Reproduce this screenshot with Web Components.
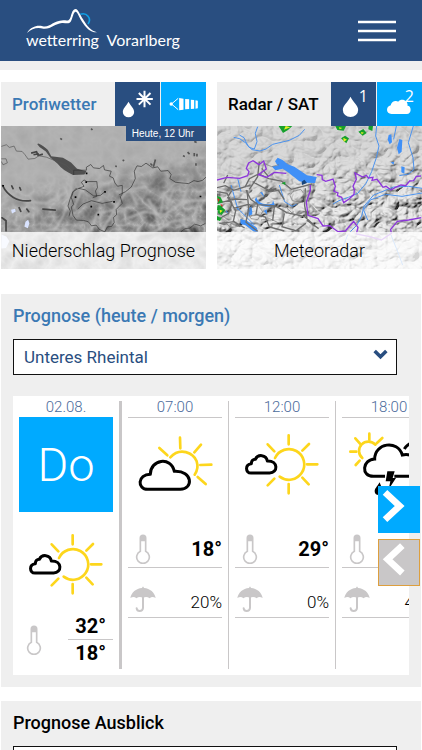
<!DOCTYPE html>
<html lang="de">
<head>
<meta charset="utf-8">
<meta name="viewport" content="width=device-width, initial-scale=1">
<title>wetterring Vorarlberg</title>
<style>
  body {
    margin: 0;
    background: #fff;
    color: #000;
    font-family: Roboto, "Liberation Sans", sans-serif;
    --blue: #294e80;
    --cyan: #0af;
    --link: #3b79b4;
    --grey: #efefef;
    --line: #c9c7c8;
  }
  main {
    display: flex;
    flex-direction: column;
    gap: 14px;
    padding: 12px 1px 24px;
  }
  .tiles {
    display: grid;
    grid-template-columns: 1fr 1fr;
    gap: 11px;
    margin: 0 -1px 11px 0;
  }
</style>
</head>
<body>

<wr-header></wr-header>
<main>
  <div class="tiles">
    <wr-tile data-icons="rainsnow,windsock" data-labels="Niederschlag,Wind">
      <a slot="title" href="#profiwetter">Profiwetter</a>
      <wr-map slot="map" data-name="precipitation"></wr-map>
      <span slot="badge">Heute, 12 Uhr</span>
      <span slot="caption">Niederschlag Prognose</span>
    </wr-tile>
    <wr-tile data-icons="drop,cloud" data-labels="Radar,Satellit" data-numbers="1,2" style="--link: #000">
      <a slot="title" href="#radar">Radar / SAT</a>
      <wr-map slot="map" data-name="radar"></wr-map>
      <span slot="caption">Meteoradar</span>
    </wr-tile>
  </div>

  <wr-panel data-title="Prognose (heute / morgen)">
    <wr-forecast>
      <wr-day data-date="02.08." data-day="Do" data-icon="sunny" data-max="32°" data-min="18°"></wr-day>
      <wr-hour data-time="07:00" data-icon="cloudy" data-temp="18°" data-rain="20%"></wr-hour>
      <wr-hour data-time="12:00" data-icon="sunny" data-temp="29°" data-rain="0%"></wr-hour>
      <wr-hour data-time="18:00" data-icon="thunder" data-temp="" data-rain="40%"></wr-hour>
    </wr-forecast>
  </wr-panel>

  <wr-panel data-title="Prognose Ausblick" style="--link: #000"></wr-panel>
</main>

<script>
const icons = {
  rainsnow: `<svg viewBox="345 21 132 132">
    <path fill="#fff" d="M384 80c7 13 17 20 17 31a17 16 0 0 1-34 0c0-11 10-18 17-31z"/>
    <path stroke="#fff" stroke-width="6" d="M432 47v50M408 72h49M415 54l35 35M450 54l-35 35"/></svg>`,
  windsock: `<svg viewBox="483 21 132 132">
    <path fill="#fff" d="M536 69l13 2v33l-13 2zM554 72l12 1v29l-12 1zM571 74l10 1v26l-10 1zM585 76l7 1v23l-7 1z"/>
    <path fill="none" stroke="#fff" stroke-width="3" d="M533 70l-20 17 20 17"/>
    <circle cx="512" cy="87" r="5" fill="#fff"/></svg>`,
  drop: `<svg viewBox="362 21 132 132">
    <path fill="#fff" d="M419 65c8 17 23 25 23 40a23 21 0 0 1-46 0c0-15 15-23 23-40z"/></svg>`,
  cloud: `<svg viewBox="499 21 132 132">
    <path fill="#fff" d="M541 117c-17 0-18-23-2-26 1-13 17-16 22-11 10-13 31-3 28 12 13 0 13 25-2 25z"/></svg>`,
  sunny: `<svg viewBox="-105 70 282 336" preserveAspectRatio="xMidYMin slice">
    <g fill="none" stroke="#fdd61c" stroke-width="8" stroke-linecap="round">
      <path d="M15 190A46 46 0 1 1 29 246"/>
      <path d="M56 122v27M56 268v28M111 209h31M97 168l20-20M97 249l19 20M13 170l-20-21M13 252l-20 20"/></g>
    <path fill="none" stroke="#000" stroke-width="9" stroke-linejoin="round" d="M-57 235c-18 0-18-26 1-28 0-14 12-13 12-13 7-16 33-15 36 5 34-1 32 36 7 36z"/></svg>`,
  cloudy: `<svg viewBox="24 70 282 336">
    <g fill="none" stroke="#fdd61c" stroke-width="8" stroke-linecap="round">
      <path d="M151 188C180 156 220 174 230 200C235 215 232 228 224 240"/>
      <path d="M180 129l1 32M243 150l-20 23M241 211l33-1M233 247l24 21M118 160l24 22"/></g>
    <path fill="none" stroke="#000" stroke-width="9" stroke-linejoin="round" d="M83 284c-32 0-31-45 8-45 0-45 62-55 72-9 57-3 57 54 18 54z"/></svg>`,
  thunder: `<svg viewBox="213 70 282 336">
    <g fill="none" stroke="#fdd61c" stroke-width="8" stroke-linecap="round">
      <path d="M274 190A28 28 0 1 1 313 150"/>
      <path d="M295 117v18M317 146l17-16M238 171h18M253 131l14 16M254 211l12-13"/></g>
    <g fill="none" stroke="#000" stroke-width="9">
      <path d="M342 245H307C269 245 274 194 311 193C311 145 380 134 394 181C450 170 466 245 414 245H370"/>
      <path d="M400 163Q408 149 425 143Q454 140 459 171"/></g>
    <path d="M349 230h22l-6 20h10l-22 34 5-24h-14zM326 263c-8 14-15 18-15 27a12 11 0 0 0 24 0c0-9-5-14-9-27z"/></svg>`,
  thermometer: `<svg viewBox="46 38 46 90">
    <path fill="none" stroke="#c9c7c8" stroke-width="5" d="M61 90V50q0-8 8-8t8 8v40a19 19 0 1 1-16 0z"/>
    <path fill="#c9c7c8" d="M61 60V48q8-12 16 0v12z"/></svg>`,
  umbrella: `<svg viewBox="31 196 78 78">
    <path fill="#c9c7c8" d="M32 232c3-16 17-29 35-30q3-9 6 0c18 1 32 14 35 30q-11-6-18 1-10-7-20-1-10-6-20 1-7-7-18-1z"/>
    <path fill="none" stroke="#c9c7c8" stroke-width="6" stroke-linecap="round" d="M70 230v32q-1 9-10 9-8 0-9-8"/></svg>`,
  chevron: `<svg viewBox="1118 176 44 34"><path fill="none" stroke="#294e80" stroke-width="11" d="M1122 182l18 18 18-18"/></svg>`,
  next: `<svg viewBox="325 273 126 140"><path fill="none" stroke="#fff" stroke-width="20" d="M346 292l44 41-44 41"/></svg>`,
  prev: `<svg viewBox="328 178 120 134"><path fill="none" stroke="#fff" stroke-width="20" d="M398 195l-44 41 44 41"/></svg>`,
  menu: `<svg viewBox="0 0 38 22"><path stroke="#fff" stroke-width="2.6" d="M0 2h38M0 11h38M0 20h38"/></svg>`
};

customElements.define('wr-icon',
    class extends HTMLElement {
        constructor() {
            super();
            this.attachShadow({ mode: 'open' });
        }

        connectedCallback() {
            this.shadowRoot.innerHTML = `
<style>
  :host { display: block; }
  svg { display: block; width: 100%; height: 100%; }
</style>
${icons[this.dataset.name]}`;
            this.shadowRoot.querySelector('svg').setAttribute('aria-hidden', 'true');
        }
    });

const maps = {
  precipitation: `<svg viewBox="3 153 612 429" preserveAspectRatio="xMidYMid slice">
    <defs>
      <filter id="relief" x="0" y="0" width="100%" height="100%" color-interpolation-filters="sRGB">
        <feTurbulence type="turbulence" baseFrequency="0.02" numOctaves="3" seed="8"/>
        <feColorMatrix values="-.9 0 0 0 .78  -.9 0 0 0 .78  -.9 0 0 0 .78  0 0 0 0 1"/>
      </filter>
      <filter id="soft"><feGaussianBlur stdDeviation="3"/></filter>
      <linearGradient id="south" x1=".3" y1="0" x2=".6" y2="1">
        <stop offset=".3" stop-color="#111"/><stop offset=".75" stop-color="#aaa"/>
      </linearGradient>
      <mask id="alps"><rect x="3" y="153" width="612" height="429" fill="url(#south)"/></mask>
    </defs>
    <rect x="3" y="153" width="612" height="429" fill="#b3b3b3"/>
    <path filter="url(#soft)" fill="#a1a1a1" d="M200 400l60-60 100-10 40-20 215-60v332H3V450z"/>
    <rect x="3" y="153" width="612" height="429" filter="url(#relief)" mask="url(#alps)"/>
    <g filter="url(#soft)" fill="none" stroke="#bdbdbd" stroke-width="5">
      <path d="M215 310l-5 50-20 60-30 50M250 330l-30 70M270 470l20-55 50-10 40-60 60-10M300 470l40-60M380 430l50-20 60 10 60-40 65-5M400 480l60-10 50-30 60-10M410 390l-20-40M440 370l30 50M490 350l-10 65M520 340l-20 50M560 340l-20 50M460 400l20 70M540 430l30 50M590 390l-10 50M100 480l60-20 40 10M20 350l60 30 60 5 60-35"/>
    </g>
    <path fill="#505050" d="M115 206c10 5 19 11 28 20l10 18 35 5 24 14 18 19 28 7-6 10-34 1c-19-8-36-20-46-33l-22-19-13-18-19-13-7-9z"/>
    <path fill="none" stroke="#444" stroke-width="5" d="M93 235l16-4 5 11 14-4M100 240l16-3"/>
    <path fill="none" stroke="#454545" stroke-width="5" stroke-linecap="round" d="M8 332q10 22 33 36 18 12 50 9M128 402l37 3M35 333l4 8M59 338l3 7M57 398l5 11M80 402l6 8M6 428l12 9v30"/>
    <g fill="none" stroke="#555" stroke-width="2">
      <path d="M4 215l15-5 9 8 14-4 7 15 17 1 8 9 10 14 20-2 12-8 22 4 30 12 30 12 20 20M4 252h14l4 12-13 6-5-10"/>
      <path stroke="#333" d="M220 300v-14h38v-9l13-8 8 10 18 2 12-9 3 13 20 4-5 15 11 5 5 15 8 10 14-3v26l-6 8 6 20-10 10-8 8 1 16-9 8 2 15-8 12-12 1-8 15-16-7-10-13-14 2-9-12-14-4-22-1-10-14-5-25 7-8-7-20 6-18 12-8 20-8-8-12 8-7 8 5h30l2 18-6 10 4 16-12 4M235 340l20 5 25 18 20-2 12-10M232 402l16-15 25-10 32 8 31-6M355 360l20-10 17-14 12-25-3-22 8-16 13 2 14-10 20 14 15-3 9 13 22-2 9 12-4 12 17 11 18 2 21 2 16-9 12 3 14-4 14-13 24-2M206 424l4-16-7-15 6-20 8-22 12-12M540 470l13-10 14-1 14-12 18 5 14-7"/>
    </g>
    <path fill="none" stroke="#555" stroke-width="5" d="M180 191l5 4M272 162l4 4M464 254l-6 22M449 266l6 6M560 232l6 6M580 235v9M588 237v8M546 243l6 2M585 265v8M366 256l5 2M344 274l5 1M580 200l7 3"/>
    <path d="M255 319h5v5h-5zM311 348h5v5h-5zM338 378h5v5h-5zM223 364h5v5h-5zM270 392h5v5h-5zM291 416h5v5h-5zM596 362h5v5h-5zM256 293h5v5h-5zM7 330h5v5h-5z"/>
    <path fill="#d9e3ff" d="M33 404l12-3 2 8-11 6zM73 455l3-15 8-6 4 10-5 15zM4 478l15 6 9 14-10 20-14 2z"/>
  </svg>`,
  radar: `<svg viewBox="18 153 615 429" preserveAspectRatio="xMidYMid slice">
    <defs>
      <filter id="relief" x="0" y="0" width="100%" height="100%">
        <feTurbulence type="turbulence" baseFrequency="0.016 0.02" numOctaves="3" seed="21"/>
        <feColorMatrix values="0 0 0 0 0  0 0 0 0 0  0 0 0 0 0  1 0 0 0 0"/>
        <feDiffuseLighting surfaceScale="26" lighting-color="#f4f4f4"><feDistantLight azimuth="225" elevation="55"/></feDiffuseLighting>
      </filter>
      <linearGradient id="south" x1=".4" y1="0" x2=".6" y2="1">
        <stop offset=".2" stop-color="#333"/><stop offset=".6" stop-color="#ccc"/>
      </linearGradient>
      <mask id="alps"><rect x="18" y="153" width="615" height="429" fill="url(#south)"/></mask>
    </defs>
    <rect x="18" y="153" width="615" height="429" fill="#d2d2d2"/>
    <rect x="18" y="153" width="615" height="429" filter="url(#relief)" mask="url(#alps)"/>
    <g fill="none" stroke="#4c93ee" stroke-width="3">
      <path d="M140 155l-7 20 5 25-8 22-16-5-8-12-20-14-18-4M85 180l14 8 10 22 14 14 24 4 18-6 20-14 50-12 30-15 16-18M497 153l-3 30 10 30-8 35-14 42-17 35-25 30-28 12-28 10-18 10M556 153l-8 40M607 153l-15 50 14 45 3 35-16 14-28 5M633 340l-40-6-45 2-60 24-30 35-5 25-15 30-20 20M633 354l-60 10-50-6-45 17-20 30 12 30M205 330l16 50 22 14 14-6M60 330l20 70 50 50M80 310l10 40M410 480l-20 50M540 480l20 50 15 40"/>
    </g>
    <path fill="#4090f7" d="M200 248c12 4 20 10 30 20l20 7 18 12 20 14 29 5-5 18-27-1-20-4-36-29-14-9-22 5-11-12 18-2-8-13zM533 180l8-2 2 24-7 6-6-14zM565 192l9 3-2 35-9 8-5-20zM571 274l10 3-1 19-9-4zM539 262l10-2-1 9zM136 366c4 16 20 26 48 20l2-10 5 14c-20 12-52 2-60-16zM110 402l12-8 2 24-11 6zM88 432l20 5 30 22 2 11-13-1-24-18-14-4zM147 352h7l6 15zM75 395l8-2-2 13zM45 406l8 9-7-3zM158 408l9-5 1 15z"/>
    <g fill="none" stroke="#6d6d6d" stroke-width="4">
      <path d="M18 338l25-6 25 14 35-11 12-24 28-14 30 14 38 7 30 25 62-16M105 345l14 28 22 16 52 4 34 20 54 12 28 25M38 325l12-25M62 347l-12 20 24 40-7 32 34 20M108 345l5 55-8 42 35 27M68 400l45-12 10 5M18 385l55-13 35 2M145 260l-5 45-25 38M152 280l20 24M125 320l55 30 22-4 18 28M18 350l30 5 15 30-10 30-35 20M140 388l-5 30 28 8 12 30 45 12M190 395l-5 42M220 415l-7 40 42 12 30-22M25 445l45-5 18 15M283 340l-2 52 8 45 34 24"/>
      <path stroke="#777" stroke-width="2" d="M245 350l24-7 10 13-9 26-26-5-7-15zM120 398l22-6 13 18-15 24-20-3-8-15zM150 300l8-35 24 10 22-6M40 440l20 18 34-6M150 435l26-4 30 14M228 400l22 20 22-5"/>
    </g>
    <path fill="none" stroke="#8d35db" stroke-width="4" d="M18 315l30-8 38 3 24-8 4-12-8-10 7-16 13-7 18 12 14-11 8 24-24 17 25 8 23-15 36 3M317 299l16 2 1 13 10 5 22-7 7 22-4 15 12 5-2 8 13 5 6 16 16-11 15-14 1-14-4-10 10-21-4-19 23 12 11-5 6 8 14-2-3 9 15-3 11 14 7 10 9-3 15 11 12-7 18-8 14 2 12-14 12-1 8-13 14-1M298 330v16l-12 35 5 40 30 10 15 22 20-1 25 18 22-2 25-29 13 18-5 20 40 8 35 10 30-20-2-12 20-24 34-4 38-7"/>
    <path fill="#16a02c" d="M203 153h41l-13 12-15 9zM373 153h32l-7 14-19-2zM390 190l12-8 12 8-8 15zM442 170l15-8 10 12-12 8zM473 153h13l-2 15-12-5zM20 403l12-8 11 10-11 15-11-5zM18 363l11 4 7 15-15 4zM18 423l14 7-5 8-9-3zM211 325l12-5v10zM20 390l14 2-4 14-12-1z"/>
    <path fill="#e9ef22" d="M224 153l14 4-19 7zM384 157l10 2-8 4zM397 188l11 6-10 6zM450 171l9 2-7 5zM26 404l9 3-8 7z"/>
    <path fill="#e12525" d="M19 370l7 3-4 9zM28 387l7 3-2 6z"/>
    <path fill="#17457d" d="M272 320l8-6 8 10-15 6z"/>
  </svg>`
};

customElements.define('wr-map',
    class extends HTMLElement {
        constructor() {
            super();
            this.attachShadow({ mode: 'open' });
        }

        connectedCallback() {
            this.shadowRoot.innerHTML = `
<style>
  :host { display: block; }
  svg { display: block; width: 100%; height: 143px; }
</style>
${maps[this.dataset.name]}`;
        }
    });

const headerhtml = `
<style>
  :host {
    display: block;
    border-bottom: 9px solid var(--grey);
  }
  header {
    display: flex;
    justify-content: space-between;
    align-items: center;
    height: 61px;
    padding: 0 26px;
    box-sizing: border-box;
    background: var(--blue);
  }
  a {
    display: flex;
    flex-direction: column;
    padding-bottom: 5px;
    color: #fff;
    font: 16px/14px Lato, sans-serif;
    white-space: pre;
    text-decoration: none;
  }
  a svg {
    width: 72px;
    height: 24px;
  }
  button {
    width: 38px;
    height: 22px;
    padding: 0;
    border: 0;
    background: none;
  }
</style>
<header>
  <a href="#start"><svg viewBox="78 28 216 72" aria-hidden="true">
      <path fill="none" stroke="#10a0e6" stroke-width="5" d="M241 44C260 37 276 57 264 73"/>
      <path fill="#fff" d="M81 100C94 80 112 76 128 80C152 84 156 64 190 62C205 63 207 64 212 51C216 38 218 29 227 28C235 29 238 42 249 59C262 81 274 94 291 98C271 99 257 83 246 66C234 46 232 36 227 36C220 36 218 57 212 66C206 75 197 69 186 70C164 72 154 89 130 87C111 83 96 86 81 100z"/>
    </svg><span>wetterring  Vorarlberg</span></a>
  <button aria-label="Menü"><wr-icon data-name="menu"></wr-icon></button>
</header>
`;

customElements.define('wr-header',
    class extends HTMLElement {
        constructor() {
            super();
            this.attachShadow({ mode: 'open' });
            this.shadowRoot.innerHTML = headerhtml;
        }
    });

const tilehtml = `
<style>
  :host {
    display: block;
    min-width: 0;
  }
  .head {
    display: flex;
    gap: 1px;
    height: 44px;
    background: var(--grey);
  }
  .title {
    flex: 1;
    align-self: center;
    padding-left: 11px;
    font: 500 17px/20px Roboto, sans-serif;
    white-space: nowrap;
  }
  ::slotted(a) {
    color: var(--link);
    text-decoration: none;
  }
  button {
    position: relative;
    width: 45px;
    padding: 0;
    border: 0;
    background: var(--blue);
    color: #fff;
    font: 16px/16px "Open Sans", sans-serif;
  }
  button wr-icon {
    height: 44px;
  }
  button:last-child {
    background: var(--cyan);
  }
  .number {
    position: absolute;
    top: 6px;
    right: 8px;
  }
  .map {
    position: relative;
  }
  .badge {
    position: absolute;
    top: 0;
    right: 0;
    padding: 0 12px 0 6px;
    background: var(--blue);
    color: #fff;
    font: 10px/15px "Liberation Sans", sans-serif;
  }
  .badge[hidden] {
    display: none;
  }
  .caption {
    position: absolute;
    left: 0;
    right: 0;
    bottom: 0;
    background: rgba(255, 255, 255, 0.8);
    font: 300 18px/37px Roboto, sans-serif;
    text-align: center;
    white-space: nowrap;
  }
</style>
<div class="head">
  <div class="title"><slot name="title"></slot></div>
</div>
<div class="map">
  <slot name="map"></slot>
  <div class="badge"><slot name="badge"></slot></div>
  <div class="caption"><slot name="caption"></slot></div>
</div>
`;

customElements.define('wr-tile',
    class extends HTMLElement {
        constructor() {
            super();
            this.attachShadow({ mode: 'open' });
            this.shadowRoot.innerHTML = tilehtml;
        }

        connectedCallback() {
            const labels = this.dataset.labels.split(',');
            const numbers = this.dataset.numbers ? this.dataset.numbers.split(',') : [];
            const head = this.shadowRoot.querySelector('.head');

            this.dataset.icons.split(',').forEach((icon, n) => {
                const number = numbers[n] ? `<span class="number">${numbers[n]}</span>` : '';
                head.insertAdjacentHTML('beforeend',
                    `<button aria-label="${labels[n]}"><wr-icon data-name="${icon}"></wr-icon>${number}</button>`);
            });
            this.shadowRoot.querySelector('.badge').hidden = !this.querySelector('[slot=badge]');
        }
    });

const panelhtml = `
<style>
  :host {
    display: block;
    padding: 12px;
    background: var(--grey);
  }
  h2 {
    margin: 0 0 13px;
    color: var(--link);
    font: 500 18px/20px Roboto, sans-serif;
  }
  .select {
    position: relative;
    margin-right: 12px;
  }
  select {
    display: block;
    width: 100%;
    height: 36px;
    padding: 0 10px;
    border: 1px solid #111;
    border-radius: 0;
    appearance: none;
    background: #fff;
    color: var(--blue);
    font: 17px/20px Roboto, sans-serif;
  }
  wr-icon {
    position: absolute;
    top: 10px;
    right: 9px;
    width: 15px;
    height: 11px;
    pointer-events: none;
  }
  ::slotted(*) {
    margin-top: 21px;
  }
</style>
<h2><label for="region"></label></h2>
<div class="select">
  <select id="region"><option>Unteres Rheintal</option></select>
  <wr-icon data-name="chevron"></wr-icon>
</div>
<slot></slot>
`;

customElements.define('wr-panel',
    class extends HTMLElement {
        constructor() {
            super();
            this.attachShadow({ mode: 'open' });
            this.shadowRoot.innerHTML = panelhtml;
        }

        connectedCallback() {
            this.shadowRoot.querySelector('label').textContent = this.dataset.title;
        }
    });

const forecasthtml = `
<style>
  :host {
    display: block;
    position: relative;
  }
  .strip {
    display: flex;
    padding: 0 0 6px;
    background: #fff;
    overflow-x: auto;
    scrollbar-width: none;
  }
  .buttons {
    position: absolute;
    top: 90px;
    right: -11px;
    display: flex;
    flex-direction: column;
    gap: 6px;
  }
  button {
    width: 42px;
    height: 47px;
    padding: 0;
    border: 0;
    background: var(--cyan);
  }
  button.prev {
    border: 1px solid #dd9f3e;
    background: #c9c7c8;
  }
</style>
<div class="strip"><slot></slot></div>
<div class="buttons">
  <button class="next" aria-label="Weiter"><wr-icon data-name="next"></wr-icon></button>
  <button class="prev" aria-label="Zurück"><wr-icon data-name="prev"></wr-icon></button>
</div>
`;

customElements.define('wr-forecast',
    class extends HTMLElement {
        constructor() {
            super();
            this.attachShadow({ mode: 'open' });
            this.shadowRoot.innerHTML = forecasthtml;

            const strip = this.shadowRoot.querySelector('.strip');
            this.shadowRoot.querySelector('.next').addEventListener('click', () => strip.scrollBy(107, 0));
            this.shadowRoot.querySelector('.prev').addEventListener('click', () => strip.scrollBy(-107, 0));
        }
    });

// shared by the day column and the hour columns
const columnstyle = `
  :host {
    display: flex;
    flex: none;
    color: #000;
  }
  .column {
    width: 94px;
    padding: 0 6px;
  }
  .bar {
    width: 1px;
    margin-top: 5px;
    background: var(--line);
  }
  .time {
    height: 21px;
    color: #4b6b9b;
    font: 300 15px/22px Roboto, sans-serif;
    text-align: center;
  }
  .temp {
    font: 700 20px/26px Roboto, sans-serif;
  }
  .thermometer {
    width: 30px;
    height: 30px;
  }
`;

customElements.define('wr-day',
    class extends HTMLElement {
        constructor() {
            super();
            this.attachShadow({ mode: 'open' });
        }

        connectedCallback() {
            const d = this.dataset;
            this.shadowRoot.innerHTML = `
<style>
  ${columnstyle}
  .bar {
    width: 3px;
  }
  .day {
    background: var(--cyan);
    color: #fff;
    font: 300 47px/95px Roboto, sans-serif;
    text-align: center;
  }
  .weather {
    height: 95px;
    margin-top: 6px;
  }
  .temps {
    display: flex;
    justify-content: space-between;
    align-items: center;
    padding-bottom: 3px;
  }
  .range {
    width: 45px;
  }
  .temp {
    padding-right: 7px;
    text-align: right;
  }
  .temp + .temp {
    border-top: 1px solid var(--line);
  }
</style>
<div class="column">
  <div class="time">${d.date}</div>
  <div class="day">${d.day}</div>
  <wr-icon class="weather" data-name="${d.icon}"></wr-icon>
  <div class="temps">
    <wr-icon class="thermometer" data-name="thermometer"></wr-icon>
    <div class="range">
      <div class="temp">${d.max}</div>
      <div class="temp">${d.min}</div>
    </div>
  </div>
</div>
<div class="bar"></div>`;
        }
    });

customElements.define('wr-hour',
    class extends HTMLElement {
        constructor() {
            super();
            this.attachShadow({ mode: 'open' });
        }

        connectedCallback() {
            const d = this.dataset;
            this.shadowRoot.innerHTML = `
<style>
  ${columnstyle}
  .time {
    border-bottom: 1px solid var(--line);
  }
  .weather {
    height: 112px;
  }
  .row {
    display: flex;
    justify-content: space-between;
    align-items: center;
    height: 37px;
    border-bottom: 1px solid var(--line);
  }
  .row.rain {
    align-items: flex-end;
    height: 44px;
    padding-bottom: 5px;
    font: 300 17px/20px Roboto, sans-serif;
  }
  .umbrella {
    width: 30px;
    height: 26px;
  }
</style>
<div class="column">
  <div class="time">${d.time}</div>
  <wr-icon class="weather" data-name="${d.icon}"></wr-icon>
  <div class="row">
    <wr-icon class="thermometer" data-name="thermometer"></wr-icon>
    <span class="temp">${d.temp}</span>
  </div>
  <div class="row rain">
    <wr-icon class="umbrella" data-name="umbrella"></wr-icon>
    <span>${d.rain}</span>
  </div>
</div>
<div class="bar"></div>`;
        }
    });
</script>
</body>
</html>
